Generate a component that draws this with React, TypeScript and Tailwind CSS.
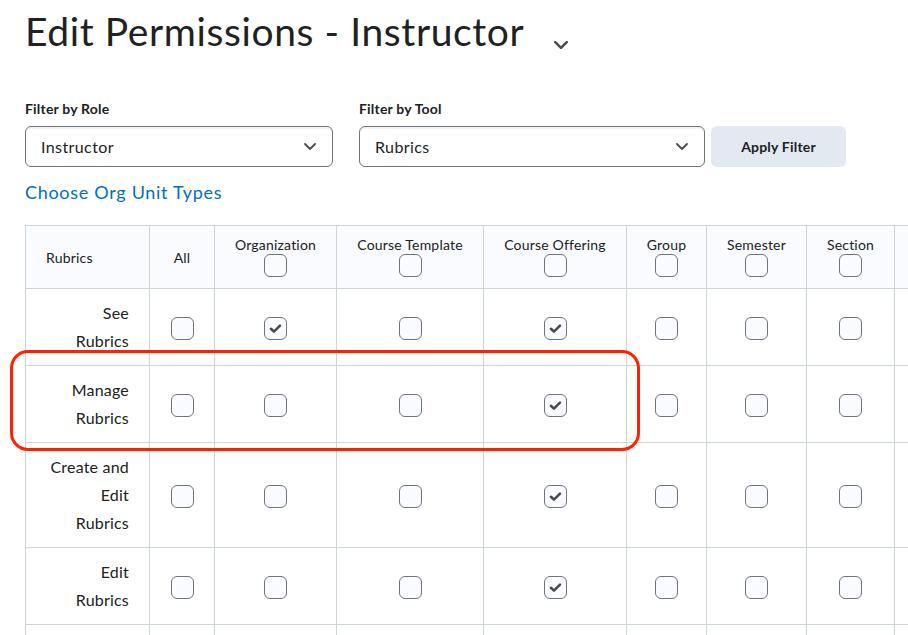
import React from "react";

type Row = { label: string[]; checked: boolean[]; height: string };

const columns = ["Organization", "Course Template", "Course Offering", "Group", "Semester", "Section", ""];

const rows: Row[] = [
  { label: ["See", "Rubrics"], checked: [false, true, false, true, false, false, false, false], height: "h-[77px]" },
  { label: ["Manage", "Rubrics"], checked: [false, false, false, true, false, false, false, false], height: "h-[77px]" },
  { label: ["Create and", "Edit", "Rubrics"], checked: [false, false, false, true, false, false, false, false], height: "h-[105px]" },
  { label: ["Edit", "Rubrics"], checked: [false, false, false, true, false, false, false, false], height: "h-[77px]" },
  { label: [], checked: [false, false, false, false, false, false, false, false], height: "h-[77px]" },
];

function Chevron({ className, width = 1.8 }: { className?: string; width?: number }) {
  return (
    <svg viewBox="0 0 12 7" className={className} fill="none">
      <path d="M1 1l5 5 5-5" stroke="#494c4e" strokeWidth={width} strokeLinecap="round" strokeLinejoin="round" />
    </svg>
  );
}

function Checkbox({ checked }: { checked?: boolean }) {
  return (
    <span className="inline-flex h-[23px] w-[23px] items-center justify-center rounded-[6px] border border-[#6e7477] bg-[#f9fbff] align-middle">
      {checked && (
        <svg viewBox="0 0 23 23" className="h-[23px] w-[23px]" fill="none">
          <path d="M6.5 11.8l3.3 3.2 6.6-6.6" stroke="#494c4e" strokeWidth="2.8" strokeLinecap="round" strokeLinejoin="round" />
        </svg>
      )}
    </span>
  );
}

function Select({ value, width }: { value: string; width: string }) {
  return (
    <div
      className={`flex h-[41px] ${width} items-center justify-between rounded-[6px] border border-[#6e7477] bg-white pl-[15px] pr-[16px] text-[16px] tracking-[0.4px] text-[#202122] shadow-[inset_0_2px_0_0_rgba(185,194,208,0.2)]`}
    >
      <span>{value}</span>
      <Chevron className="h-[7px] w-[12px]" />
    </div>
  );
}

export default function App() {
  return (
    <div className="relative h-[635px] w-[908px] overflow-hidden bg-white font-['Lato','Liberation_Sans',sans-serif] tracking-[0.2px] text-[#202122]">
      <div className="px-[25px] pt-[8px]">
        <div className="flex items-start">
          <h1 className="text-[39px] font-normal leading-[47px] tracking-[0.6px]">Edit Permissions - Instructor</h1>
          <Chevron className="ml-[30px] mt-[33px] h-[8px] w-[14px]" width={2.2} />
        </div>

        <div className="mt-[44px] flex items-end">
          <div>
            <div className="text-[14px] font-bold leading-[20px]">Filter by Role</div>
            <div className="mt-[7px]">
              <Select value="Instructor" width="w-[308px]" />
            </div>
          </div>
          <div className="ml-[26px]">
            <div className="text-[14px] font-bold leading-[20px]">Filter by Tool</div>
            <div className="mt-[7px]">
              <Select value="Rubrics" width="w-[346px]" />
            </div>
          </div>
          <button className="ml-[6px] h-[41px] w-[135px] rounded-[6px] bg-[#e3e9f1] text-[14px] font-bold text-[#202122]">
            Apply Filter
          </button>
        </div>

        <a className="mt-[14px] block text-[18px] leading-[22px] tracking-[0.7px] text-[#006fbf]">Choose Org Unit Types</a>

        <table className="mt-[22px] w-[990px] table-fixed border-collapse">
          <colgroup>
            <col className="w-[124px]" />
            <col className="w-[65px]" />
            <col className="w-[122px]" />
            <col className="w-[147px]" />
            <col className="w-[143px]" />
            <col className="w-[80px]" />
            <col className="w-[100px]" />
            <col className="w-[88px]" />
            <col className="w-[121px]" />
          </colgroup>
          <thead>
            <tr className="h-[63px] bg-[#f9fbff]">
              <th className="border border-[#cdd5dc] pl-[20px] text-left text-[14px] font-normal">Rubrics</th>
              <th className="border border-[#cdd5dc] text-center text-[14px] font-normal">All</th>
              {columns.map((c, i) => (
                <th key={i} className="border border-[#cdd5dc] pb-[2px] text-center align-middle text-[14px] font-normal">
                  {c && (
                    <>
                      <div className="leading-[18px]">{c}</div>
                      <div className="flex justify-center">
                        <Checkbox />
                      </div>
                    </>
                  )}
                </th>
              ))}
            </tr>
          </thead>
          <tbody>
            {rows.map((r, ri) => (
              <tr key={ri} className={r.height}>
                <td className="border border-[#cdd5dc] py-[10px] pr-[20px] text-right text-[16px] leading-[28px]">
                  {r.label.map((l) => (
                    <div key={l}>{l}</div>
                  ))}
                </td>
                {r.checked.map((c, i) => (
                  <td key={i} className="border border-[#cdd5dc] pt-[2px] text-center align-middle">
                    {r.label.length > 0 && (
                      <div className="flex justify-center">
                        <Checkbox checked={c} />
                      </div>
                    )}
                  </td>
                ))}
              </tr>
            ))}
          </tbody>
        </table>
      </div>

      <div className="pointer-events-none absolute left-[10px] top-[350px] h-[101px] w-[630px] rounded-[18px] border-[3px] border-[#ff2200]" />
    </div>
  );
}
